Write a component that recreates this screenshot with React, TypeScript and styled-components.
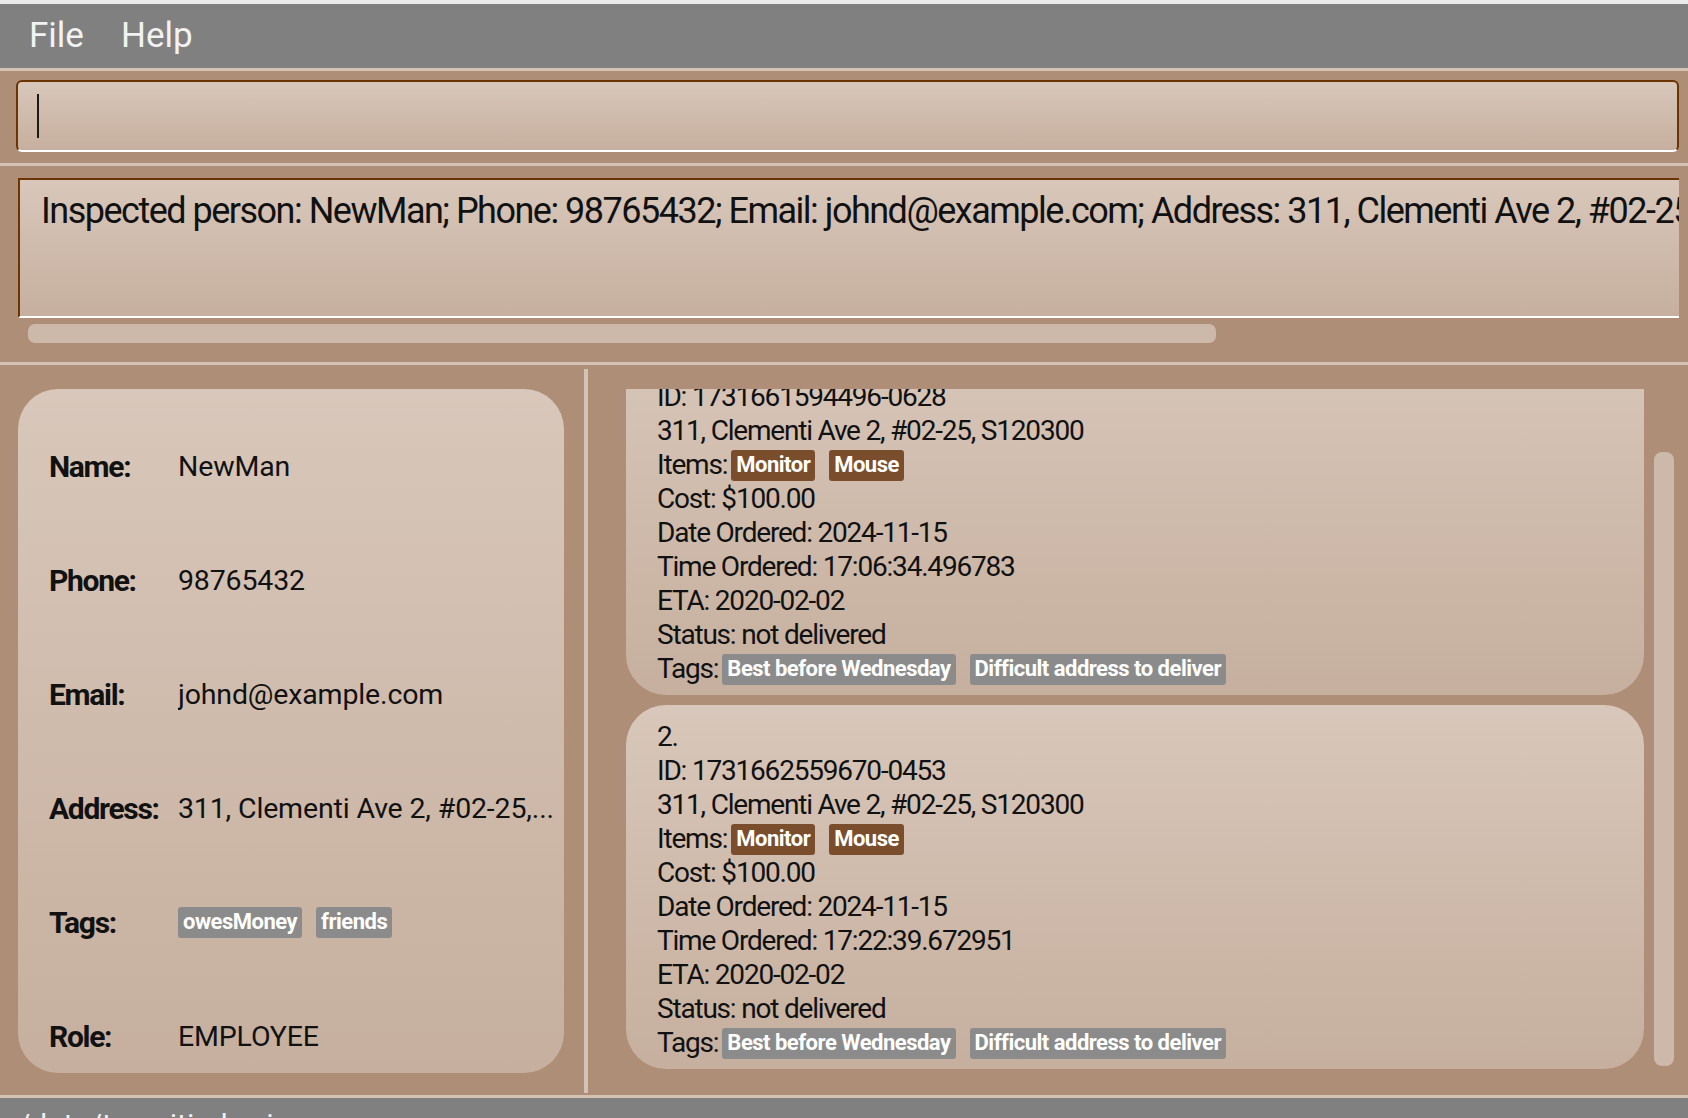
import React, { useLayoutEffect, useRef } from "react";
import styled, { createGlobalStyle } from "styled-components";

const GlobalStyle = createGlobalStyle`
  html, body {
    margin: 0;
    padding: 0;
    width: 1688px;
    height: 1118px;
    overflow: hidden;
    background: #ae8e76;
  }
  body {
    font-family: Roboto, "Liberation Sans", Arial, sans-serif;
    color: #111;
  }
  * { box-sizing: border-box; }
`;

const BROWN = "#ae8e76";
const BEIGE_LINE = "#d4c2b4";
const DARK_BORDER = "#6b3400";
const CARD_BG = "linear-gradient(180deg, #d8c7ba 0%, #c6af9e 100%)";

const Window = styled.div`
  display: flex;
  flex-direction: column;
  width: 1688px;
  height: 1118px;
  overflow: hidden;
  border-top: 4px solid #ebebeb;
  background: ${BROWN};
`;

const MenuBar = styled.nav`
  flex-shrink: 0;
  height: 67px;
  display: flex;
  align-items: flex-start;
  gap: 37px;
  padding-left: 29px;
  background: #808080;
  border-bottom: 3px solid ${BEIGE_LINE};
`;

const MenuItem = styled.span`
  font-size: 35px;
  line-height: 64px;
  color: #f2f2f2;
`;

const CommandSection = styled.section`
  flex-shrink: 0;
  height: 95px;
  padding: 9px 9px 0 16px;
  border-bottom: 3px solid ${BEIGE_LINE};
`;

const CommandBox = styled.div`
  height: 72px;
  padding: 12px 0 0 19px;
  border: 2px solid ${DARK_BORDER};
  border-bottom-color: #ffffff;
  border-radius: 6px;
  background: ${CARD_BG};
`;

const Caret = styled.span`
  display: block;
  width: 1.5px;
  height: 44px;
  background: #1a1a1a;
`;

const ResultSection = styled.section`
  flex-shrink: 0;
  height: 199px;
  padding: 12px 9px 0 18px;
  border-bottom: 3px solid ${BEIGE_LINE};
  display: flex;
  flex-direction: column;
  gap: 6px;
`;

const ResultBox = styled.div`
  height: 140px;
  padding: 9px 0 0 21px;
  border-top: 2px solid ${DARK_BORDER};
  border-left: 2px solid ${DARK_BORDER};
  border-bottom: 2px solid #ffffff;
  background: ${CARD_BG};
  overflow: hidden;
  white-space: nowrap;
  font-size: 36px;
  line-height: 44px;
  letter-spacing: -1.5px;
`;

const HScrollThumb = styled.div`
  margin-left: 10px;
  width: 1188px;
  height: 19px;
  border-radius: 7px;
  background: #cdb9aa;
`;

const Main = styled.main`
  flex-shrink: 0;
  height: 733px;
  display: flex;
  border-bottom: 3px solid ${BEIGE_LINE};
`;

const LeftPane = styled.section`
  width: 584px;
  flex-shrink: 0;
  padding: 24px 20px 22px 18px;
  display: flex;
`;

const PersonCard = styled.div`
  flex: 1;
  border-radius: 40px;
  background: ${CARD_BG};
  padding-left: 31px;
  display: flex;
  flex-direction: column;
`;

const PersonRow = styled.div`
  height: 114px;
  padding-top: 40px;
  display: grid;
  grid-template-columns: 129px 1fr;
  align-items: center;
`;

const PersonLabel = styled.span`
  font-size: 30px;
  font-weight: 700;
  letter-spacing: -1.3px;
`;

const PersonValue = styled.span`
  font-size: 28.5px;
  letter-spacing: -0.15px;
  white-space: nowrap;
  overflow: hidden;
  display: flex;
  align-items: center;
  gap: 14px;
`;

const Divider = styled.div`
  width: 4px;
  flex-shrink: 0;
  margin: 4px 0 2px;
  background: ${BEIGE_LINE};
`;

const RightPane = styled.section`
  flex: 1;
  display: flex;
  gap: 10px;
  padding: 24px 14px 2px 38px;
  min-width: 0;
`;

const ListViewport = styled.div`
  flex: 1;
  overflow: hidden;
`;

const OrderList = styled.div`
  display: flex;
  flex-direction: column;
  gap: 10px;
  padding-bottom: 40px;
`;

const OrderCard = styled.article`
  border-radius: 40px;
  background: ${CARD_BG};
  padding: 15px 31px 9px;
  font-size: 28px;
  line-height: 34px;
  letter-spacing: -1.2px;
`;

const Line = styled.div`
  height: 34px;
  display: flex;
  align-items: center;
  white-space: nowrap;
`;

const ChipGroup = styled.span`
  display: inline-flex;
  align-items: center;
  gap: 14px;
  margin-left: 4px;
`;

const Chip = styled.span<{ $tone: "item" | "tag" }>`
  display: inline-flex;
  align-items: center;
  height: 31px;
  padding: 0 5px;
  border-radius: 3px;
  background: ${(p) => (p.$tone === "item" ? "#7a4e2c" : "#8b8b8b")};
  color: #ffffff;
  font-size: 22px;
  font-weight: 700;
  letter-spacing: -0.5px;
  line-height: 1;
`;

const ScrollTrack = styled.div`
  width: 20px;
  flex-shrink: 0;
  padding-top: 63px;
  padding-bottom: 27px;
  display: flex;
`;

const VScrollThumb = styled.div`
  flex: 1;
  border-radius: 8px;
  background: #cdb9aa;
`;

const StatusBar = styled.footer`
  flex: 1;
  background: #808080;
  overflow: hidden;
  padding: 12px 0 0 10px;
  font-size: 30px;
  line-height: 1;
  color: #efefef;
  white-space: nowrap;
`;

type Order = {
  index: number;
  id: string;
  address: string;
  items: string[];
  cost: string;
  date: string;
  time: string;
  eta: string;
  status: string;
  tags: string[];
};

const orders: Order[] = [
  {
    index: 1,
    id: "1731661594496-0628",
    address: "311, Clementi Ave 2, #02-25, S120300",
    items: ["Monitor", "Mouse"],
    cost: "$100.00",
    date: "2024-11-15",
    time: "17:06:34.496783",
    eta: "2020-02-02",
    status: "not delivered",
    tags: ["Best before Wednesday", "Difficult address to deliver"],
  },
  {
    index: 2,
    id: "1731662559670-0453",
    address: "311, Clementi Ave 2, #02-25, S120300",
    items: ["Monitor", "Mouse"],
    cost: "$100.00",
    date: "2024-11-15",
    time: "17:22:39.672951",
    eta: "2020-02-02",
    status: "not delivered",
    tags: ["Best before Wednesday", "Difficult address to deliver"],
  },
];

const OrderCardView: React.FC<{ order: Order }> = ({ order }) => (
  <OrderCard>
    <Line>{order.index}.</Line>
    <Line>ID: {order.id}</Line>
    <Line>{order.address}</Line>
    <Line>
      Items:
      <ChipGroup>
        {order.items.map((it) => (
          <Chip key={it} $tone="item">
            {it}
          </Chip>
        ))}
      </ChipGroup>
    </Line>
    <Line>Cost: {order.cost}</Line>
    <Line>Date Ordered: {order.date}</Line>
    <Line>Time Ordered: {order.time}</Line>
    <Line>ETA: {order.eta}</Line>
    <Line>Status: {order.status}</Line>
    <Line>
      Tags:
      <ChipGroup>
        {order.tags.map((t) => (
          <Chip key={t} $tone="tag">
            {t}
          </Chip>
        ))}
      </ChipGroup>
    </Line>
  </OrderCard>
);

export default function App() {
  const viewportRef = useRef<HTMLDivElement>(null);

  useLayoutEffect(() => {
    if (viewportRef.current) viewportRef.current.scrollTop = 58;
  }, []);

  return (
    <>
      <GlobalStyle />
      <Window>
        <MenuBar>
          <MenuItem>File</MenuItem>
          <MenuItem>Help</MenuItem>
        </MenuBar>

        <CommandSection>
          <CommandBox>
            <Caret />
          </CommandBox>
        </CommandSection>

        <ResultSection>
          <ResultBox>
            Inspected person: NewMan; Phone: 98765432; Email: johnd@example.com; Address: 311, Clementi Ave 2,
            #02-25, S120300; Tags: [owesMoney][friends]; Role: EMPLOYEE
          </ResultBox>
          <HScrollThumb />
        </ResultSection>

        <Main>
          <LeftPane>
            <PersonCard>
              <PersonRow>
                <PersonLabel>Name:</PersonLabel>
                <PersonValue>NewMan</PersonValue>
              </PersonRow>
              <PersonRow>
                <PersonLabel>Phone:</PersonLabel>
                <PersonValue>98765432</PersonValue>
              </PersonRow>
              <PersonRow>
                <PersonLabel>Email:</PersonLabel>
                <PersonValue>johnd@example.com</PersonValue>
              </PersonRow>
              <PersonRow>
                <PersonLabel>Address:</PersonLabel>
                <PersonValue>311, Clementi Ave 2, #02-25,...</PersonValue>
              </PersonRow>
              <PersonRow>
                <PersonLabel>Tags:</PersonLabel>
                <PersonValue>
                  <Chip $tone="tag">owesMoney</Chip>
                  <Chip $tone="tag">friends</Chip>
                </PersonValue>
              </PersonRow>
              <PersonRow>
                <PersonLabel>Role:</PersonLabel>
                <PersonValue>EMPLOYEE</PersonValue>
              </PersonRow>
            </PersonCard>
          </LeftPane>

          <Divider />

          <RightPane>
            <ListViewport ref={viewportRef}>
              <OrderList>
                {orders.map((o) => (
                  <OrderCardView key={o.id} order={o} />
                ))}
              </OrderList>
            </ListViewport>
            <ScrollTrack>
              <VScrollThumb />
            </ScrollTrack>
          </RightPane>
        </Main>

        <StatusBar>./data/transitindex.json</StatusBar>
      </Window>
    </>
  );
}
